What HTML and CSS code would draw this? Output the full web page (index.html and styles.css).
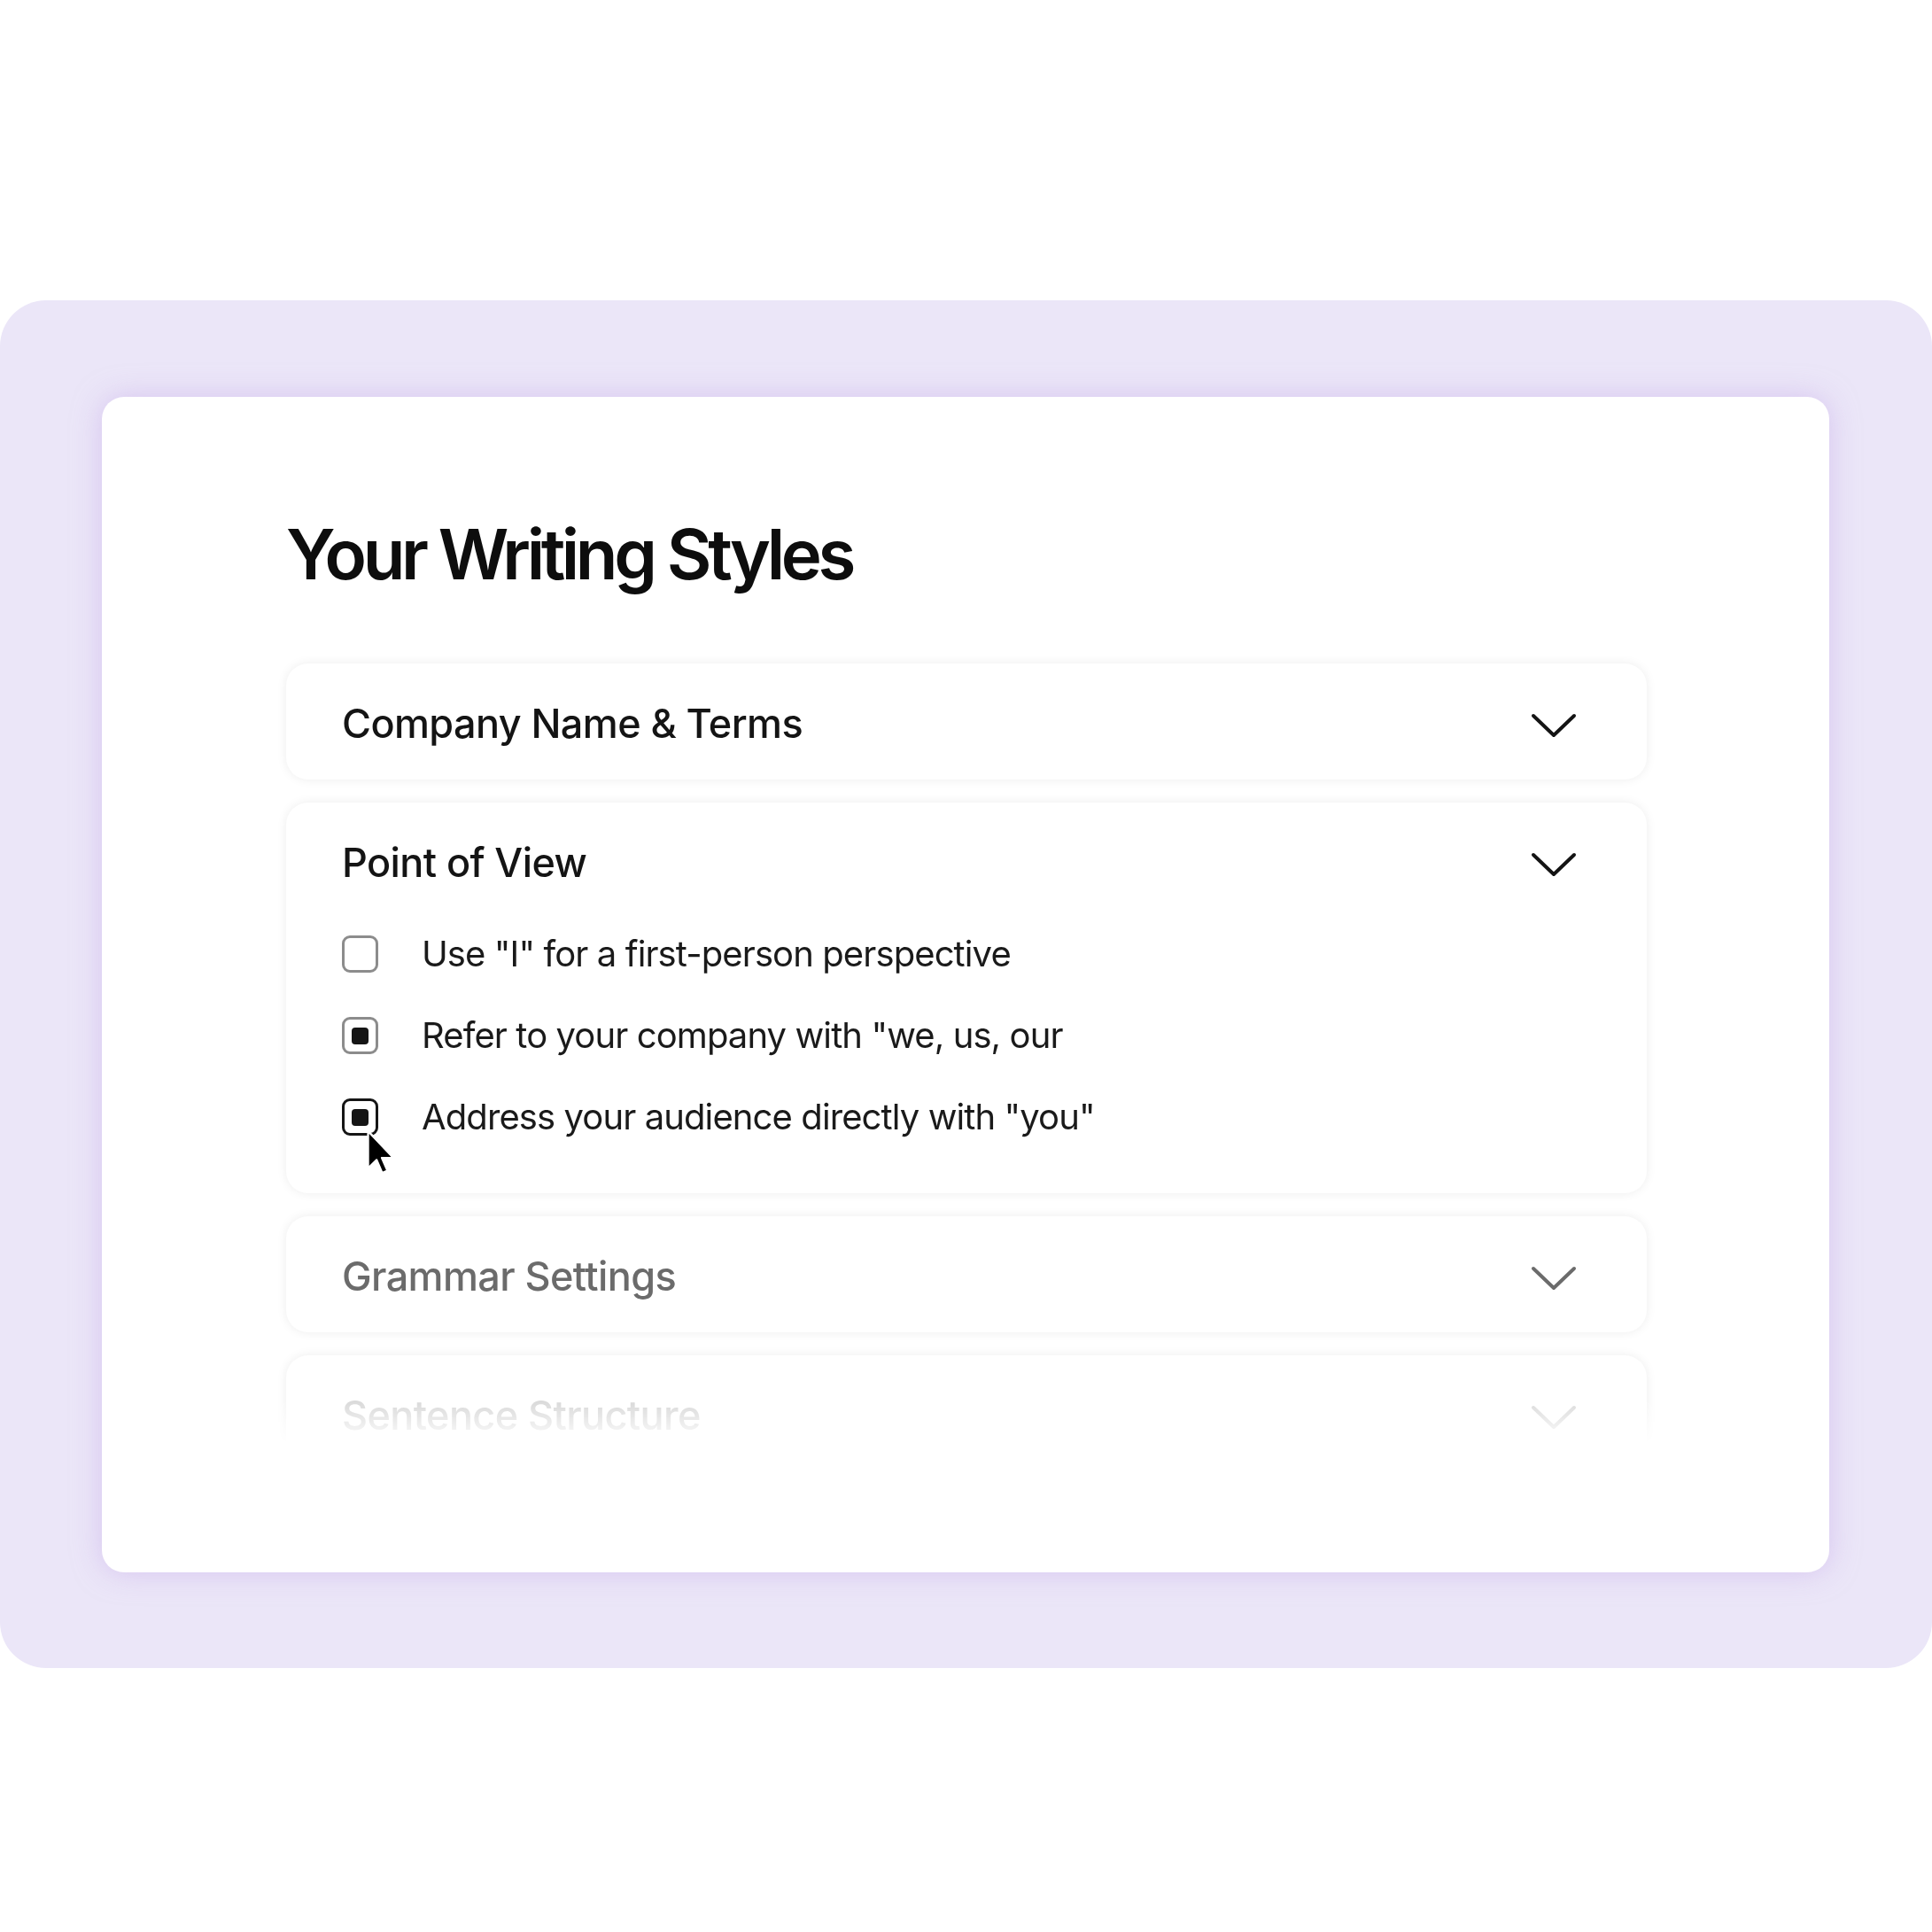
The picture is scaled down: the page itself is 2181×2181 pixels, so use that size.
FILE: index.html
```html
<!DOCTYPE html>
<html lang="en">
<head>
    <meta charset="UTF-8">
    <meta name="viewport" content="width=device-width, initial-scale=1.0">
    <title>Your Writing Styles</title>
    <link rel="stylesheet" href="styles.css">
</head>
<body>
    <div class="page">
        <div class="backdrop">
            <div class="card">
                <h1 class="title">Your Writing Styles</h1>
                <div class="list">
                    <div class="item">
                        <div class="item-head">
                            <span class="item-name">Company Name &amp; Terms</span>
                            <svg class="chevron" width="52" height="28" viewBox="0 0 52 28"><path d="M3 3 L26 25 L49 3" /></svg>
                        </div>
                    </div>
                    <div class="item">
                        <div class="item-head">
                            <span class="item-name">Point of View</span>
                            <svg class="chevron" width="52" height="28" viewBox="0 0 52 28"><path d="M3 3 L26 25 L49 3" /></svg>
                        </div>
                        <ul class="options">
                            <li class="option">
                                <span class="box"></span>
                                <span class="label">Use "I" for a first-person perspective</span>
                            </li>
                            <li class="option">
                                <span class="box checked"></span>
                                <span class="label">Refer to your company with "we, us, our</span>
                            </li>
                            <li class="option">
                                <span class="box checked active">
                                    <svg class="cursor" width="33" height="54" viewBox="0 0 13 21"><path d="M1 1 L1 17.5 L4.8 13.8 L7.3 19.6 L9.6 18.6 L7.1 12.9 L12.3 12.9 Z" /></svg>
                                </span>
                                <span class="label">Address your audience directly with "you"</span>
                            </li>
                        </ul>
                    </div>
                    <div class="item muted">
                        <div class="item-head">
                            <span class="item-name">Grammar Settings</span>
                            <svg class="chevron" width="52" height="28" viewBox="0 0 52 28"><path d="M3 3 L26 25 L49 3" /></svg>
                        </div>
                    </div>
                    <div class="item faint">
                        <div class="item-head">
                            <span class="item-name">Sentence Structure</span>
                            <svg class="chevron" width="52" height="28" viewBox="0 0 52 28"><path d="M3 3 L26 25 L49 3" /></svg>
                        </div>
                    </div>
                </div>
            </div>
        </div>
    </div>
</body>
</html>
```

FILE: styles.css
```css
* { box-sizing: border-box; }
body { margin: 0; background: #fff; font-family: Inter, "Noto Sans", sans-serif; color: #141414; }
.page { padding-top: 339px; height: 2181px; }
.backdrop { height: 1544px; background: #ebe6f8; border-radius: 52px; padding: 109px 116px 108px 115px; }
.card { height: 1327px; background: #fff; border-radius: 25px; box-shadow: 0 0 32px rgba(196, 170, 232, 0.55); padding: 139px 206px 0 208px; }
.title { margin: 0 0 64px; font-size: 78px; line-height: 1; font-weight: 600; letter-spacing: -4.4px; color: #0d0d0d; }

.list { margin: 0 -20px; padding: 20px 20px 0; height: 901px; overflow: hidden; display: flex; flex-direction: column; gap: 26px;
    -webkit-mask-image: linear-gradient(#000 calc(100% - 50px), transparent); mask-image: linear-gradient(#000 calc(100% - 50px), transparent); }
.item { flex: none; background: #fff; border-radius: 25px; box-shadow: 0 0 12px rgba(0, 0, 0, 0.075); }
.item-head { height: 131px; padding: 3px 79px 0 63px; display: flex; align-items: center; justify-content: space-between; }
.item-name { font-size: 45px; line-height: 1; font-weight: 500; letter-spacing: -0.6px; }
.chevron { display: block; margin-top: 6px; }
.chevron path { fill: none; stroke: #141414; stroke-width: 4; stroke-linecap: round; stroke-linejoin: round; }

.muted .item-name { color: #6b6b6b; }
.muted .chevron path { stroke: #6b6b6b; }
.faint .item-name { color: #d8d8d8; }
.faint .chevron path { stroke: #dadada; }

.options { list-style: none; margin: 0; padding: 19px 63px 65px; display: flex; flex-direction: column; gap: 50px; }
.option { display: flex; align-items: center; gap: 49px; }
.box { position: relative; flex: none; width: 41px; height: 42px; border: 3px solid #8c8c8c; border-radius: 9px; display: flex; align-items: center; justify-content: center; }
.box.checked::before { content: ""; width: 19px; height: 19px; border-radius: 4px; background: #151515; }
.box.active { border: 3.5px solid #151515; }
.label { font-size: 40px; line-height: 1; font-weight: 400; letter-spacing: -0.9px; color: #1a1a1a; }

.cursor { position: absolute; left: 24px; top: 31px; }
.cursor path { fill: #000; stroke: #fff; stroke-width: 0.9; stroke-linejoin: round; }
```
